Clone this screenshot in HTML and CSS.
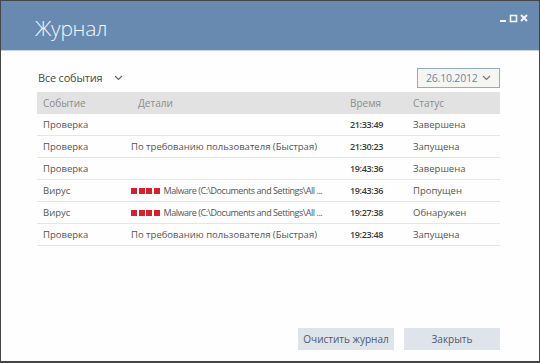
FILE: index.html
```html
<!DOCTYPE html>
<html>
<head>
<meta charset="utf-8">
<link rel="stylesheet" href="styles.css">
</head>
<body>
<div class="window">
  <header class="titlebar">
    <h1 class="title">Журнал</h1>
    <div class="controls">
      <svg width="30" height="10" viewBox="0 0 30 10">
        <rect x="0" y="7" width="6" height="2" fill="#f2f4f8"/>
        <rect x="10.5" y="2.5" width="6" height="6" fill="none" stroke="#f2f4f8" stroke-width="1.6"/>
        <path d="M21 2 L27 8 M27 2 L21 8" stroke="#f2f4f8" stroke-width="2"/>
      </svg>
    </div>
  </header>
  <main class="content">
    <div class="toolbar">
      <div class="filter">Все события <span class="chev">
        <svg width="9" height="6" viewBox="0 0 9 6"><path d="M1 1 L4.5 4.5 L8 1" fill="none" stroke="#666" stroke-width="1.2"/></svg></span></div>
      <div class="date">26.10.2012
        <svg width="9" height="6" viewBox="0 0 9 6"><path d="M1 1 L4.5 4.5 L8 1" fill="none" stroke="#777" stroke-width="1.2"/></svg></div>
    </div>
    <div class="table">
      <div class="row head">
        <span class="c-ev">Событие</span><span class="c-det h">Детали</span><span class="c-time">Время</span><span class="c-st">Статус</span>
      </div>
      <div class="row">
        <span class="c-ev">Проверка</span><span class="c-det"></span><span class="c-time t">21:33:49</span><span class="c-st">Завершена</span>
      </div>
      <div class="row">
        <span class="c-ev">Проверка</span><span class="c-det">По требованию пользователя (Быстрая)</span><span class="c-time t">21:30:23</span><span class="c-st">Запущена</span>
      </div>
      <div class="row">
        <span class="c-ev">Проверка</span><span class="c-det"></span><span class="c-time t">19:43:36</span><span class="c-st">Завершена</span>
      </div>
      <div class="row">
        <span class="c-ev">Вирус</span><span class="c-det"><i class="lvl"><b></b><b></b><b></b><b></b></i><span class="mal">Malware (C:\Documents and Settings\All&nbsp;...</span></span><span class="c-time t">19:43:36</span><span class="c-st">Пропущен</span>
      </div>
      <div class="row">
        <span class="c-ev">Вирус</span><span class="c-det"><i class="lvl"><b></b><b></b><b></b><b></b></i><span class="mal">Malware (C:\Documents and Settings\All&nbsp;...</span></span><span class="c-time t">19:27:38</span><span class="c-st">Обнаружен</span>
      </div>
      <div class="row">
        <span class="c-ev">Проверка</span><span class="c-det">По требованию пользователя (Быстрая)</span><span class="c-time t">19:23:48</span><span class="c-st">Запущена</span>
      </div>
    </div>
    <div class="footer">
      <button class="btn">Очистить журнал</button>
      <button class="btn">Закрыть</button>
    </div>
  </main>
</div>
</body>
</html>
```
FILE: styles.css
```css
html, body { margin: 0; padding: 0; }
body { font-family: "Open Sans", "Noto Sans", sans-serif; background: #fff; }
.window {
  width: 540px; height: 363px; box-sizing: border-box;
  border: 1px solid #454545; border-bottom-width: 2px;
  display: flex; flex-direction: column; background: #fefefe;
}
.titlebar {
  height: 49px; flex: none; background: #6889b0;
  display: flex; justify-content: space-between; align-items: flex-start;
  border-bottom: 1px solid #c4d2e2;
}
.title {
  margin: 13px 0 0 34px; font-weight: 300; font-size: 21px; line-height: 28px;
  color: #f4f6fa; letter-spacing: -0.3px;
}
.controls { margin: 5px 9px 0 0; }
.content {
  flex: 1; display: flex; flex-direction: column;
  padding: 16px 39px 11px 36px;
}
.toolbar {
  display: flex; justify-content: space-between; align-items: center;
  height: 21px;
}
.filter { font-size: 11px; color: #4a4a4a; display: flex; align-items: center; padding-left: 1px; letter-spacing: -0.2px; }
.chev { margin-left: 12px; display: flex; }
.date {
  width: 83px; height: 20px; box-sizing: border-box;
  border: 1px solid #93aac6; background: #f5f6f2;
  font-size: 10.5px; color: #6a86ac; display: flex; align-items: center; justify-content: space-between;
  padding: 0 8px 0 8px; letter-spacing: -0.2px;
}
.table { margin-top: 4px; }
.row {
  display: flex; align-items: center; height: 21px; border-bottom: 1px solid #e6e6e6;
  font-size: 9.5px; color: #555;
}
.row.head { background: #e2e2e2; border-bottom: none; height: 22px; color: #8c8c8c; font-size: 10px; }
.c-ev { width: 94px; padding-left: 6px; box-sizing: border-box; }
.c-det { width: 219px; flex: none; white-space: nowrap; display: flex; align-items: center; }
.c-det.h { padding-left: 7px; box-sizing: border-box; }
.mal { font-size: 9px; letter-spacing: -0.45px; }
.c-time { width: 63px; }
.c-time.t { color: #3a3a3a; font-weight: 600; font-size: 9px; letter-spacing: -0.35px; }
.c-st { flex: 1; }
.lvl { display: inline-flex; gap: 1.5px; margin-right: 4px; flex: none; }
.lvl b { width: 6px; height: 6px; background: #d6202e; display: block; }
.footer {
  margin-top: auto; display: flex; justify-content: flex-end; gap: 10px;
}
.btn {
  width: 96px; height: 22px; border: none; background: #dfe3ea;
  font-family: inherit; font-size: 10px; color: #4d5a6c; padding: 0;
}
```
